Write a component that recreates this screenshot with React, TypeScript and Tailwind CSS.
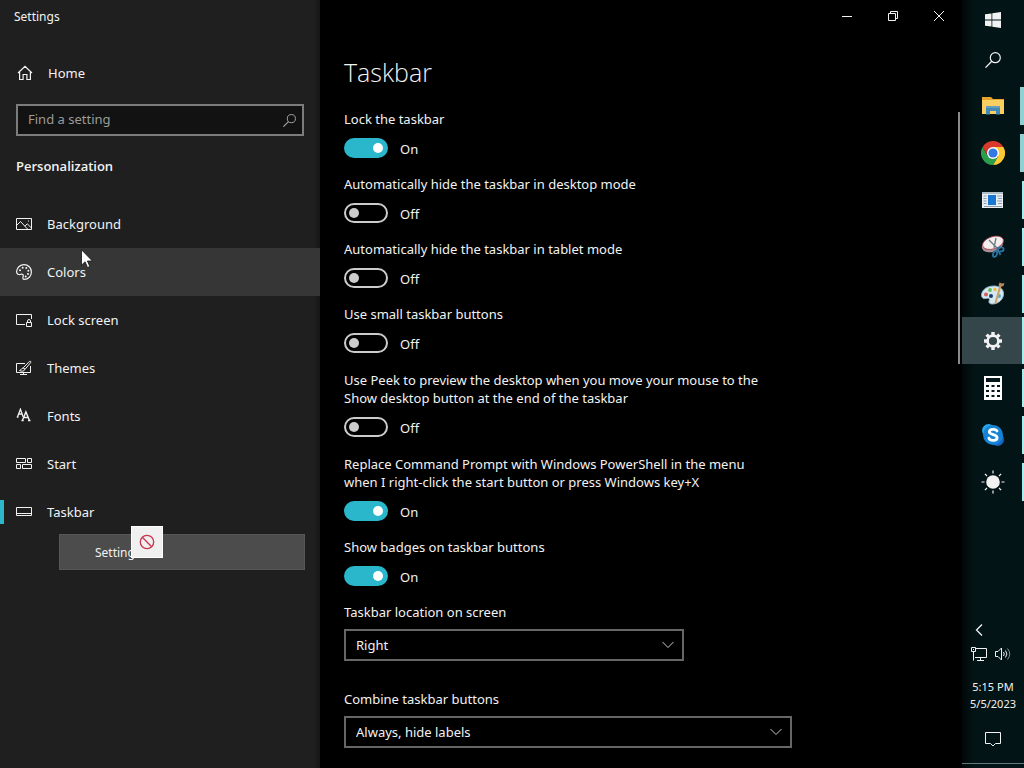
import { useState } from "react";
import type { ReactNode } from "react";

const ink = { fill: "none", stroke: "currentColor", strokeWidth: 1 };

const HomeIcon = () => (
  <svg className="h-4 w-4" viewBox="0 0 16 16" {...ink}>
    <path d="M1 8 8 1.400 15 8M2.600 6.800v7.700h3.500v-5h3.800v5h3.500V6.800" strokeWidth="1.200" />
  </svg>
);
const SearchIcon = ({ className }: { className: string }) => (
  <svg className={className} viewBox="0 0 16 16" {...ink}>
    <circle cx="10.300" cy="5.700" r="5" strokeWidth="1.200" />
    <path d="M6.800 9.300 .5 15.600" strokeWidth="1.300" />
  </svg>
);
const BackgroundIcon = () => (
  <svg className="h-4 w-4" viewBox="0 0 16 16" {...ink}>
    <path d="M.5 2.500h15v11H.5zM.5 9.500 4.500 5.500l7.500 8M9 10.200l2.200-2.400 4.300 4.200" />
    <path d="M12 5h1" />
  </svg>
);
const ColorsIcon = () => (
  <svg className="h-4 w-4" viewBox="0 0 16 16" {...ink}>
    <path d="M.6 7.200C1 3.300 4.300.6 8 .6c4.200 0 7.400 3.300 7.400 7.400S12.200 15.400 8.400 15.400c-2 0-1.600-1.700-1.200-3 .5-1.600-.9-2.800-2.300-2.200C3 11 .4 10.300.6 7.200Z" strokeWidth="1.200" />
    <g fill="currentColor" stroke="none">
      <circle cx="4" cy="6.300" r="1" /><circle cx="6.700" cy="3.700" r="1" /><circle cx="10.300" cy="4" r="1" />
      <circle cx="12.300" cy="6.800" r="1" /><circle cx="12" cy="10" r="1" /><circle cx="9.700" cy="12.500" r="1" />
    </g>
  </svg>
);
const LockScreenIcon = () => (
  <svg className="h-4 w-4" viewBox="0 0 16 16" {...ink}>
    <path d="M9 12.500H.5v-10h15V7M10.500 10.500h5v4h-5zM11.500 10.500V9a1.500 1.500 0 0 1 3 0v1.500" />
  </svg>
);
const ThemesIcon = () => (
  <svg className="h-4 w-4" viewBox="0 0 16 16" {...ink}>
    <path d="M9 3.500H.5v9h14V6M7.500 12.500v2M4 14.500h7" />
    <path d="m7.300 7.800 6-6.300c1-.9 2.100.2 1.300 1.200L9 9.300ZM7.200 8c-2 0-1.700 2.200-3.700 2.500 2.200 1.300 5 .8 5.300-1.200Z" />
  </svg>
);
const FontsIcon = () => (
  <svg className="h-4 w-4" viewBox="0 0 16 16" {...ink}>
    <path d="m1.500 9 2.900-7.800L7.200 9M2.500 6h3.800M.8 9h1.700" strokeWidth="1.300" />
    <path d="M6.400 12.500 9.900 3.900l3.600 8.600M7.700 9.500h4.500M5.500 12.500h2.200M12 12.500h2.500" strokeWidth="1.400" />
  </svg>
);
const StartIcon = () => (
  <svg className="h-4 w-4" viewBox="0 0 16 16" {...ink}>
    <path d="M.5 2.500h9v4h-9zM11.500 2.500h4v4h-4zM.5 8.500h4v4h-4zM6.500 8.500h9v4h-9z" />
  </svg>
);
const TaskbarIcon = () => (
  <svg className="h-4 w-4" viewBox="0 0 16 16" {...ink}>
    <path d="M.5 3.500h15v8H.5zM.5 9.500h15" />
  </svg>
);

const navItems: { label: string; icon: ReactNode; tone: string; marker: string }[] = [
  { label: "Background", icon: <BackgroundIcon />, tone: "", marker: "" },
  { label: "Colors", icon: <ColorsIcon />, tone: "bg-[#363636]", marker: "" },
  { label: "Lock screen", icon: <LockScreenIcon />, tone: "", marker: "" },
  { label: "Themes", icon: <ThemesIcon />, tone: "", marker: "" },
  { label: "Fonts", icon: <FontsIcon />, tone: "", marker: "" },
  { label: "Start", icon: <StartIcon />, tone: "", marker: "" },
  { label: "Taskbar", icon: <TaskbarIcon />, tone: "", marker: "bg-[#2db7c9]" },
];

function Sidebar() {
  return (
    <aside className="flex w-80 shrink-0 flex-col bg-linear-to-r from-[#1f1f1f] from-98% to-[#161616]">
      <div className="flex h-8 items-center px-[14px] pt-px text-xs">Settings</div>
      <a href="#home" className="mt-[17px] flex h-12 items-center gap-4 px-4">
        <span className="w-4 pl-px"><HomeIcon /></span>
        <span className="pt-0.5">Home</span>
      </a>
      <div className="mx-4 mt-[7px] flex h-8 items-center border-2 border-[#7c7c7c] bg-[#121212] pl-[10px] pr-[6px]">
        <input aria-label="Find a setting" placeholder="Find a setting" className="min-w-0 flex-1 bg-transparent outline-none placeholder:text-[#9b9b9b]" />
        <SearchIcon className="h-[13px] w-[13px] text-[#a8a8a8]" />
      </div>
      <h2 className="mt-5 px-4 leading-5 font-['Open_Sans','Noto_Sans',sans-serif] font-semibold">Personalization</h2>
      <nav className="mt-6">
        {navItems.map((item) => (
          <a key={item.label} href={`#${item.label}`} className={`flex h-12 items-center ${item.tone}`}>
            <span className={`h-6 w-1 ${item.marker}`} />
            <span className="ml-3 w-4">{item.icon}</span>
            <span className="ml-[15px] pt-0.5">{item.label}</span>
          </a>
        ))}
      </nav>
    </aside>
  );
}

function Toggle({ id, label, initial, wraps }: { id: string; label: string; initial: boolean; wraps?: boolean }) {
  const [on, setOn] = useState(initial);
  return (
    <div className={wraps ? "pt-px" : ""}>
      <label htmlFor={id} className="block max-w-[430px] leading-[18px]">{label}</label>
      <div className="mt-[10px] flex h-5 items-center gap-3">
        <input
          id={id}
          type="checkbox"
          role="switch"
          checked={on}
          onChange={() => setOn(!on)}
          className="flex h-5 w-11 appearance-none items-center rounded-full border-2 border-[#cccccc] px-[3px] before:block before:h-[10px] before:w-[10px] before:rounded-full before:bg-[#cccccc] checked:justify-end checked:border-[#2ab6cb] checked:bg-[#2ab6cb] checked:before:bg-white"
        />
        <span className="pt-0.5 leading-[18px]">{on ? "On" : "Off"}</span>
      </div>
    </div>
  );
}

function Choice({ id, label, options, width }: { id: string; label: string; options: string[]; width: string }) {
  return (
    <div>
      <label htmlFor={id} className="block leading-[18px]">{label}</label>
      <div className={`mt-2 grid items-center ${width}`}>
        <select id={id} className="col-start-1 row-start-1 h-8 w-full appearance-none border-2 border-[#666666] bg-black px-[10px] pt-0.5">
          {options.map((o) => <option key={o}>{o}</option>)}
        </select>
        <svg className="pointer-events-none col-start-1 row-start-1 mr-[10px] h-3 w-3 justify-self-end text-[#c8c8c8]" viewBox="0 0 12 12" {...ink}>
          <path d="m.500 3 5.500 5.500L11.500 3" />
        </svg>
      </div>
    </div>
  );
}

const toggles = [
  { label: "Lock the taskbar", initial: true },
  { label: "Automatically hide the taskbar in desktop mode", initial: false },
  { label: "Automatically hide the taskbar in tablet mode", initial: false },
  { label: "Use small taskbar buttons", initial: false },
  { label: "Use Peek to preview the desktop when you move your mouse to the Show desktop button at the end of the taskbar", initial: false, wraps: true },
  { label: "Replace Command Prompt with Windows PowerShell in the menu when I right-click the start button or press Windows key+X", initial: true, wraps: true },
  { label: "Show badges on taskbar buttons", initial: true },
];

function Content() {
  return (
    <main className="flex min-w-0 flex-1 flex-col">
      <div className="flex h-8 justify-end">
        <button aria-label="Minimize" className="grid w-[46px] place-items-center">
          <svg className="h-[10px] w-[10px]" viewBox="0 0 10 10" {...ink}><path d="M0 5.500h10" /></svg>
        </button>
        <button aria-label="Restore" className="grid w-[46px] place-items-center">
          <svg className="h-[10px] w-[10px]" viewBox="0 0 10 10" {...ink}><path d="M.5 2.500h7v7h-7zM2.500 2.500v-2h7v7h-2" /></svg>
        </button>
        <button aria-label="Close" className="grid w-[46px] place-items-center">
          <svg className="h-[10px] w-[10px]" viewBox="0 0 10 10" {...ink}><path d="m0 0 10 10M10 0 0 10" /></svg>
        </button>
      </div>
      <div className="flex flex-1">
        <div className="flex-1 px-6 pb-5">
          <h1 className="mt-[22px] font-['Open_Sans','Noto_Sans',sans-serif] text-[25px] leading-9 font-light">Taskbar</h1>
          <div className="mt-5 flex flex-col gap-[17px]">
            {toggles.map((t, i) => <Toggle key={t.label} id={`toggle-${i}`} {...t} />)}
            <div className="flex flex-col gap-[29px]">
              <Choice id="location" label="Taskbar location on screen" options={["Right", "Left", "Top", "Bottom"]} width="max-w-[340px]" />
              <Choice id="combine" label="Combine taskbar buttons" options={["Always, hide labels", "When taskbar is full", "Never"]} width="max-w-[448px]" />
            </div>
          </div>
        </div>
        <div className="mr-0.5 mt-20 h-[252px] w-0.5 bg-[#8a8a8a]" />
      </div>
    </main>
  );
}

const WindowsLogo = () => (
  <svg className="h-4 w-4" viewBox="0 0 16 16" fill="currentColor">
    <path d="M0 2.300 6.500 1.400v6.200H0ZM7.300 1.300 16 0v7.600H7.300ZM0 8.400h6.500v6.200L0 13.700ZM7.300 8.400H16V16l-8.700-1.300Z" />
  </svg>
);
const ExplorerIcon = () => (
  <svg className="h-6 w-6" viewBox="0 0 24 24">
    <path d="M1 3h9l2 2h11v15H1Z" fill="#e5a52c" />
    <path d="M1 6h22v14H1Z" fill="#f9cf62" />
    <path d="M5 12h14v8.500h-4V17H9v3.500H5Z" fill="#4389b8" />
    <path d="M5 12h14v2H5Z" fill="#659fbd" />
  </svg>
);
const ChromeIcon = () => (
  <svg className="h-6 w-6" viewBox="0 0 24 24">
    <path d="M12 6h10.400A12 12 0 0 1 12 24l5.200-9Z" fill="#fcc934" />
    <path d="M12 24A12 12 0 0 1 1.600 6l5.200 9 5.200 3 5.200-3Z" fill="#2a9e4b" />
    <path d="M1.600 6A12 12 0 0 1 22.400 6H12L7 15Z" fill="#d9382d" />
    <circle cx="12" cy="12" r="6" fill="#fff" />
    <circle cx="12" cy="12" r="4.600" fill="#3478e5" />
  </svg>
);
const PanelIcon = () => (
  <svg className="h-6 w-6" viewBox="0 0 24 24">
    <path d="M1 4h21v16H1Z" fill="#e9eef2" />
    <path d="M1 4h21v2H1Z" fill="#aebdc7" />
    <path d="M7 7h8v10H7Z" fill="#1878d2" />
    <path d="M2.500 8h3M2.500 10.500h3M2.500 13h3M2.500 15.500h3M16 8h5M17 10.500h4M16 13h5M17 15.500h4M3 18.500h18" stroke="#8c9cac" />
  </svg>
);
const SnipIcon = () => (
  <svg className="h-6 w-6" viewBox="0 0 24 24">
    <ellipse cx="11.500" cy="10" rx="11" ry="6.800" transform="rotate(-18 11.500 10)" fill="#a88f98" />
    <ellipse cx="12" cy="7.800" rx="10.800" ry="6.100" transform="rotate(-18 12 7.800)" fill="#f5eeee" stroke="#a8404b" strokeWidth=".8" />
    <path d="m8 5 8 8M15 3l-2 10" stroke="#667985" strokeWidth="1.300" />
    <g fill="none" stroke="#28739f" strokeWidth="1.800">
      <ellipse cx="19.500" cy="14.500" rx="3.200" ry="2" transform="rotate(-10 19.500 14.500)" />
      <ellipse cx="14" cy="19" rx="1.900" ry="3" transform="rotate(20 14 19)" />
      <path d="m16.500 14 3 6" />
    </g>
  </svg>
);
const PaintIcon = () => (
  <svg className="h-6 w-6" viewBox="0 0 24 24">
    <path d="M.5 13C1 7 7 4 13 4c5 0 9 2.500 9.500 7 .500 6-5 11-11 11-4 0-4-2.500-3-4 .5-2-2-2-3.500-1.500C2.500 17 .5 16 .500 13Z" fill="#d5e8f1" stroke="#8fb4c8" />
    <circle cx="5" cy="12.500" r="2" fill="#d95f55" /><circle cx="9" cy="8" r="1.900" fill="#65b950" />
    <circle cx="14" cy="7.500" r="1.700" fill="#eeb93e" /><circle cx="10" cy="14" r="2" fill="#123d68" /><circle cx="18" cy="14" r="2" fill="#58a9db" />
    <path d="m20.500 4-5 17-2 1 .500-3 4.500-16Z" fill="#d0a063" />
    <path d="m17.500 3 1-2.500 2.500 1 2.500-.5-1 3-3.500 1Z" fill="#b68759" />
  </svg>
);
const GearIcon = () => (
  <svg className="h-[18px] w-[18px]" viewBox="0 0 18 18" fill="none" stroke="currentColor">
    <circle cx="9" cy="9" r="5.400" strokeWidth="2.600" />
    <path d="M9 0v3M9 15v3M0 9h3M15 9h3M2.600 2.600l2 2M13.400 13.400l2 2M15.400 2.600l-2 2M4.600 13.400l-2 2" strokeWidth="3.400" />
  </svg>
);
const CalculatorIcon = () => (
  <svg className="h-6 w-6" viewBox="0 0 24 24">
    <path d="M3 0h18v24H3Z" fill="#fff" />
    <path d="M5 2h14v4H5ZM5 9h3v2H5ZM10.500 9h3v2h-3ZM16 9h3v2h-3ZM5 14h3v2H5ZM10.500 14h3v2h-3ZM16 14h3v2h-3ZM5 19h3v2H5ZM10.500 19h3v2h-3ZM16 19h3v2h-3Z" fill="#06171a" />
  </svg>
);
const SkypeIcon = () => (
  <svg className="h-6 w-6" viewBox="0 0 24 24">
    <circle cx="7.500" cy="7.500" r="6.500" fill="#28a8ea" /><circle cx="16.500" cy="16.500" r="6.500" fill="#1667c5" />
    <circle cx="12" cy="12" r="10" fill="#1584d6" />
    <path d="M16 8c-1-2.300-7.500-2.500-7.700.7-.2 3.700 7.800 2.200 7.800 6 0 3.500-7.300 3.500-8.200.4" fill="none" stroke="#fff" strokeWidth="2.800" strokeLinecap="round" />
  </svg>
);
const SunIcon = () => (
  <svg className="h-6 w-6" viewBox="0 0 24 24" fill="none" stroke="currentColor" strokeWidth="1.200">
    <circle cx="12" cy="12" r="6.800" fill="currentColor" stroke="none" />
    <path d="M12 .5v3M12 20.500v3M.5 12h3M20.500 12h3M3.900 3.900 6 6M18 18l2.100 2.100M20.100 3.900 18 6M6 18l-2.100 2.100" />
  </svg>
);

const apps: { name: string; icon: ReactNode; tone: string; bar: string }[] = [
  { name: "File Explorer", icon: <ExplorerIcon />, tone: "", bar: "h-[38px] w-1 bg-[#8fd0d3]" },
  { name: "Chrome", icon: <ChromeIcon />, tone: "", bar: "h-[38px] w-1 bg-[#8fd0d3]" },
  { name: "Panel", icon: <PanelIcon />, tone: "", bar: "h-[38px] w-0.5 bg-[#a9eeee]" },
  { name: "Snipping Tool", icon: <SnipIcon />, tone: "", bar: "h-[38px] w-0.5 bg-[#a9eeee]" },
  { name: "Paint", icon: <PaintIcon />, tone: "", bar: "h-[38px] w-0.5 bg-[#a9eeee]" },
  { name: "Settings", icon: <GearIcon />, tone: "bg-[#34464a]", bar: "h-full w-0.5 bg-[#a9eeee]" },
  { name: "Calculator", icon: <CalculatorIcon />, tone: "", bar: "h-[38px] w-0.5 bg-[#a9eeee]" },
  { name: "Skype", icon: <SkypeIcon />, tone: "", bar: "h-[38px] w-0.5 bg-[#a9eeee]" },
  { name: "Brightness", icon: <SunIcon />, tone: "", bar: "h-[38px] w-0.5 bg-[#a9eeee]" },
];

function Taskbar() {
  return (
    <aside className="flex w-[62px] shrink-0 flex-col bg-linear-to-r from-[#010809] to-[#031416] to-20%">
      <button aria-label="Start" className="grid h-10 place-items-center"><WindowsLogo /></button>
      <button aria-label="Search" className="grid h-10 place-items-center"><SearchIcon className="h-4 w-4" /></button>
      <div className="mt-0.5 flex flex-col">
        {apps.map((app) => (
          <button key={app.name} aria-label={app.name} className={`grid h-[47px] grid-cols-1 items-center ${app.tone}`}>
            <span className="col-start-1 row-start-1 justify-self-center">{app.icon}</span>
            <span className={`col-start-1 row-start-1 justify-self-end ${app.bar}`} />
          </button>
        ))}
      </div>
      <div className="mt-auto flex flex-col pb-2">
        <button aria-label="Show hidden icons" className="ml-[11px] grid h-6 w-3 place-items-center">
          <svg className="h-3 w-2" viewBox="0 0 8 12" {...ink}><path d="M7 .5 1.500 6 7 11.500" strokeWidth="1.300" /></svg>
        </button>
        <div className="flex h-6 items-center gap-2 pl-[9px]">
          <svg className="h-4 w-4" viewBox="0 0 16 16" {...ink}>
            <path d="M5 2.500h10.500v9H4M9.500 11.500v3M6 14.500h7M.5 1.500h4v4h-4zM2.500 5.500v9M2.500 3v1" />
          </svg>
          <svg className="h-4 w-4" viewBox="0 0 16 16" {...ink}>
            <path d="M.5 5.500H3L6.500 2v12L3 10.500H.5zM8.500 6q1.500 2 0 4M10.500 4.500q2.800 3.500 0 7" />
            <path d="M12.500 2.500q4.500 5.500 0 11" opacity=".55" />
          </svg>
        </div>
        <div className="mt-3 text-center text-[11px] leading-[17px]">
          <div>5:15 PM</div>
          <div>5/5/2023</div>
        </div>
        <button aria-label="Notifications" className="mt-[11px] grid h-8 place-items-center">
          <svg className="h-4 w-4" viewBox="0 0 16 16" {...ink}><path d="M.5 1.500h15v11h-5L8 15l-2.500-2.500h-5z" /></svg>
        </button>
      </div>
      <button aria-label="Show desktop" className="h-[5px] border-t border-[#5f7a7d]" />
    </aside>
  );
}

function DragGhost() {
  return (
    <div className="absolute left-[59px] top-[534px] h-9 w-[246px] border border-[#565656] bg-[#4c4c4c] text-xs leading-9">
      <span className="pl-[35px]">Settings</span>
      <div className="absolute -top-[9px] left-[71px] grid h-8 w-8 place-items-center border border-white bg-[#f0f0f0]">
        <svg className="h-4 w-4" viewBox="0 0 16 16" fill="none" stroke="#c8354f" strokeWidth="1.300">
          <circle cx="8" cy="8" r="6.700" /><path d="m3.300 3.300 9.400 9.400" />
        </svg>
      </div>
    </div>
  );
}

export default function App() {
  return (
    <div className="relative flex min-h-screen bg-black font-['Noto_Sans','Open_Sans',sans-serif] text-[13px] text-[#f2f2f2]">
      <Sidebar />
      <Content />
      <Taskbar />
      <DragGhost />
      <svg className="absolute left-[81px] top-[249px] h-5 w-3" viewBox="0 0 12 20" fill="#fff" stroke="#111" strokeWidth=".8">
        <path d="M.5.8v15.400l3.600-3.400 2.400 5.700 2.300-1-2.400-5.500h5Z" />
      </svg>
    </div>
  );
}
